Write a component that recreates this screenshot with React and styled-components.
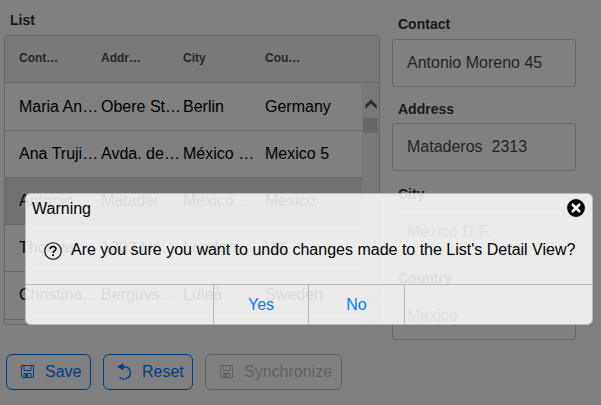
import React from "react";
import styled, { createGlobalStyle, css } from "styled-components";

const Global = createGlobalStyle`
  * { box-sizing: border-box; }
  body { margin: 0; background: #808080; overflow: hidden; font-family: "Liberation Sans", Arial, sans-serif; font-size: 16px; color: #000; }
`;

const Page = styled.div`
  position: relative;
  width: 601px;
  height: 405px;
  overflow: hidden;
  background: #808080;
`;
const Columns = styled.main`
  display: flex;
  gap: 12px;
  padding-left: 4px;
  height: 354px;
`;
const ListPane = styled.section`
  width: 376px;
  padding-top: 12px;
`;
const Label = styled.div`
  padding-left: 6px;
  height: 15px;
  line-height: 16px;
  font-size: 14px;
  font-weight: 700;
  color: #1a1a1a;
`;
const Table = styled.div`
  margin-top: 8px;
  height: 290px;
  border: 1px solid #676767;
  border-radius: 3px;
  overflow: hidden;
`;
const Row = styled.div`
  display: grid;
  grid-template-columns: repeat(4, 82px);
  padding-left: 14px;
  height: 47.2px;
  line-height: 46px;
  border-bottom: 1px solid #676767;
  background: ${(p) => (p.$selected ? "#717171" : "transparent")};
`;
const HeaderRow = styled(Row)`
  height: 47px;
  line-height: 45px;
  background: #797979;
  color: #282828;
  font-size: 12px;
  font-weight: 700;
`;
const Cell = styled.span`
  width: ${(p) => p.$width || 81}px;
  white-space: nowrap;
  overflow: hidden;
  text-overflow: ellipsis;
`;
const Body = styled.div`
  display: flex;
  height: 241px;
`;
const Rows = styled.div`
  width: 357px;
  padding-top: 0.6px;
`;
const Scrollbar = styled.div`
  width: 17px;
  margin-top: 1px;
  background: #797979;
  display: flex;
  flex-direction: column;
  align-items: center;
  padding: 15px 0 17px;
  svg { display: block; flex: none; }
`;
const Thumb = styled.div`
  width: 15px;
  height: 15px;
  margin: 7px 0 auto;
  background: #676767;
`;
const Form = styled.section`
  width: 184px;
  padding-top: 16px;
`;
const Field = styled.div`
  height: 84.3px;
  & + & ${Label} { line-height: 18px; }
`;
const Input = styled.div`
  margin-top: 8px;
  height: 48px;
  padding-left: 14px;
  line-height: 46px;
  border: 1px solid #676767;
  border-radius: 3px;
  color: #252525;
  white-space: pre;
`;
const Actions = styled.footer`
  display: flex;
  gap: 12px;
  padding-left: 6px;
`;
const ActionButton = styled.button`
  width: ${(p) => p.$width}px;
  height: 36px;
  padding: 0 0 0 13px;
  display: flex;
  align-items: center;
  border: 1px solid #003f87;
  border-radius: 6px;
  background: transparent;
  color: #003f87;
  font: inherit;
  svg { width: 14px; height: 16px; margin-bottom: 2px; flex: none; overflow: visible; }
  span { margin-left: 11px; }
  &:disabled { color: #606060; border-color: #606060; }
`;
const Dialog = styled.div`
  position: absolute;
  left: 25px;
  top: 193px;
  width: 568px;
  height: 132px;
  display: flex;
  flex-direction: column;
  border: 1px solid #b9b9b9;
  border-radius: 5px;
  background: rgba(250, 250, 250, 0.87);
  background-clip: padding-box;
`;
const DialogHeader = styled.header`
  display: flex;
  justify-content: space-between;
  height: 36px;
  padding: 5px 7px 0 6px;
  line-height: 20px;
`;
const Message = styled.div`
  display: flex;
  height: 54px;
  padding-left: 18px;
  line-height: 39px;
  white-space: nowrap;
  svg { margin: 12px 9px 0 0; flex: none; }
`;
const DialogActions = styled.footer`
  display: flex;
  flex: 1;
  padding-left: 187px;
  border-top: 1px solid #b9b9b9;
`;
const Choice = styled.button`
  width: ${(p) => p.$width}px;
  padding: 1px 0 0;
  border: 0;
  border-left: 1px solid #b9b9b9;
  ${(p) => p.$last && css`border-right: 1px solid #b9b9b9;`}
  background: transparent;
  color: #007aff;
  font: inherit;
`;

const Chevron = ({ down }) => (
  <svg width="12" height="12" viewBox="0 0 12 12">
    <path
      d={down ? "M0.3 1L6 6.2L11.7 1V5L6 10.5L0.3 5Z" : "M0.3 10L6 4.8L11.7 10V6L6 0.5L0.3 6Z"}
      fill={down ? "#606060" : "#303030"}
    />
  </svg>
);
const SaveIcon = () => (
  <svg viewBox="0 0 14 16" fill="none" stroke="currentColor">
    <path d="M1.5 2.5H13.5V14.5H2.5L1.5 13.5Z" />
    <path d="M4 2.5V7.5H11V2.5M4 14.5V10.5H11V14.5" />
    <path d="M5.5 11H8V14H5.5Z" fill="currentColor" stroke="none" />
  </svg>
);
const UndoIcon = () => (
  <svg viewBox="0 0 14 16" fill="none" stroke="currentColor">
    <path d="M5 3.8H7.5C14.8 4.1 14.8 13.5 9.7 15.2" strokeWidth="1.4" />
    <path d="M9.7 15.2C7.2 17 3.6 16 2 13.5" strokeWidth="1.4" strokeDasharray="2.2 0.6" />
    <path d="M0 3.8L6.5 0.3V7.3Z" fill="currentColor" stroke="none" />
  </svg>
);
const QuestionIcon = () => (
  <svg width="18" height="18" viewBox="0 0 18 18" fill="none" stroke="#000">
    <circle cx="9" cy="9" r="8.2" strokeWidth="1.1" />
    <path d="M6.2 7.3C6.2 3.5 12 3.9 12 6.8C12 8.8 9.1 8.8 9.1 11" strokeWidth="1.6" />
    <path d="M8.2 12.2H10V14.1H8.2Z" fill="#000" stroke="none" />
  </svg>
);
const CloseIcon = () => (
  <svg width="18" height="18" viewBox="0 0 18 18">
    <circle cx="9" cy="9" r="8.9" />
    <path d="M5 5L13 13M13 5L5 13" stroke="#fff" strokeWidth="2.5" />
  </svg>
);

const headings = ["Contact", "Address", "City", "Country"];
const people = [
  ["Maria Anders", "Obere Str. 57", "Berlin", "Germany"],
  ["Ana Trujillo 2", "Avda. de la Constitución", "México D.F.", "Mexico 5"],
  ["Antonio", "Mataderos 2312", "México D.F.", "Mexico"],
  ["Thomas Hardy", "1203 Hanover Sq.", "London", "UK"],
  ["Christina Berglund", "Berguvsvägen 8", "Luleå", "Sweden"],
];
const fields = [
  ["Contact", "Antonio Moreno 45"],
  ["Address", "Mataderos  2313"],
  ["City", "México D.F."],
  ["Country", "Mexico"],
];

export default function App() {
  return (
    <>
      <Global />
      <Page>
        <Columns>
          <ListPane>
            <Label>List</Label>
            <Table>
              <HeaderRow>
                {headings.map((h) => <Cell key={h} $width={h === "Country" ? 42 : 44}>{h}</Cell>)}
              </HeaderRow>
              <Body>
                <Rows>
                  {people.map((person, i) => (
                    <Row key={person[0]} $selected={i === 2}>
                      {person.map((value, j) => <Cell key={j}>{value}</Cell>)}
                    </Row>
                  ))}
                </Rows>
                <Scrollbar><Chevron /><Thumb /><Chevron down /></Scrollbar>
              </Body>
            </Table>
          </ListPane>
          <Form>
            {fields.map(([label, value]) => (
              <Field key={label}><Label>{label}</Label><Input>{value}</Input></Field>
            ))}
          </Form>
        </Columns>
        <Actions>
          <ActionButton $width={85}><SaveIcon /><span>Save</span></ActionButton>
          <ActionButton $width={90}><UndoIcon /><span>Reset</span></ActionButton>
          <ActionButton $width={137} disabled><SaveIcon /><span>Synchronize</span></ActionButton>
        </Actions>
        <Dialog role="dialog" aria-label="Warning">
          <DialogHeader><span>Warning</span><CloseIcon /></DialogHeader>
          <Message><QuestionIcon />Are you sure you want to undo changes made to the List's Detail View?</Message>
          <DialogActions>
            <Choice $width={95}>Yes</Choice>
            <Choice $width={97} $last>No</Choice>
          </DialogActions>
        </Dialog>
      </Page>
    </>
  );
}
